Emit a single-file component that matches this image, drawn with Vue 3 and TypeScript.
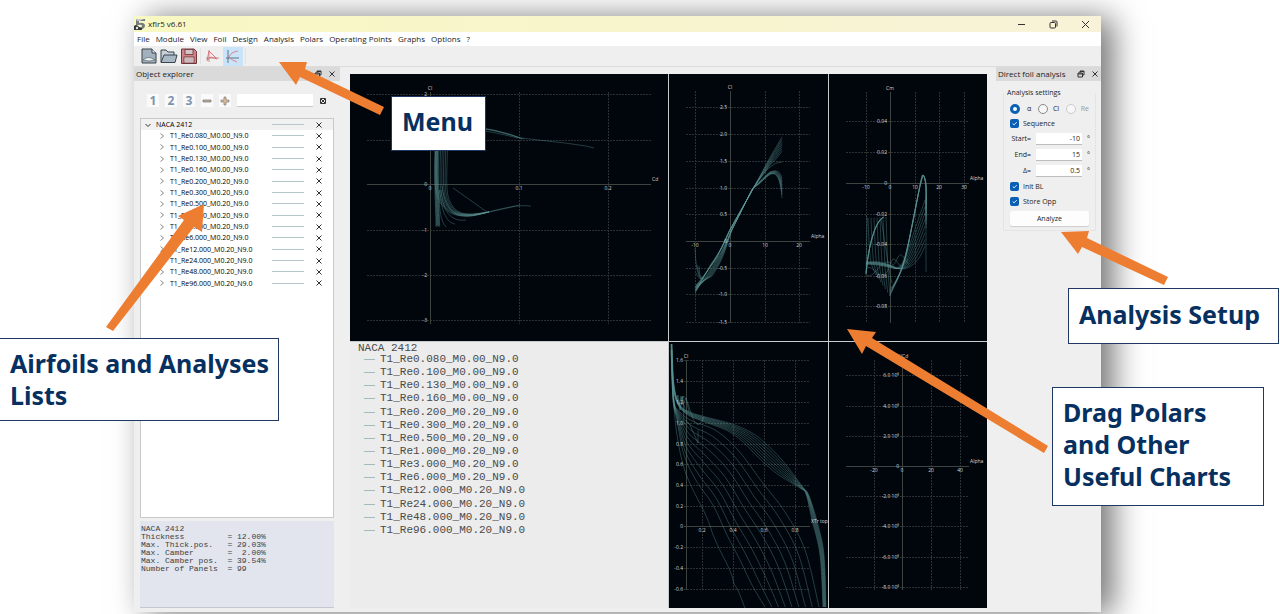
<script setup lang="ts">
import { ref } from 'vue'

interface Tick { at: number; text: string }
type Point = [number, number]
interface Chart {
  id: string
  view: string
  xTitle: Tick
  yTitle: string
  axisX: number
  axisY: number
  left: number
  right: number
  top: number
  bottom: number
  xTicks: Tick[]
  yTicks: Tick[]
  curves: string[]
}

const menus = ['File', 'Module', 'View', 'Foil', 'Design', 'Analysis', 'Polars', 'Operating Points', 'Graphs', 'Options', '?']

const polars = [
  'T1_Re0.080_M0.00_N9.0', 'T1_Re0.100_M0.00_N9.0', 'T1_Re0.130_M0.00_N9.0', 'T1_Re0.160_M0.00_N9.0',
  'T1_Re0.200_M0.20_N9.0', 'T1_Re0.300_M0.20_N9.0', 'T1_Re0.500_M0.20_N9.0', 'T1_Re1.000_M0.20_N9.0',
  'T1_Re3.000_M0.20_N9.0', 'T1_Re6.000_M0.20_N9.0', 'T1_Re12.000_M0.20_N9.0', 'T1_Re24.000_M0.20_N9.0',
  'T1_Re48.000_M0.20_N9.0', 'T1_Re96.000_M0.20_N9.0',
]

const foilInfo = [
  'NACA 2412',
  'Thickness         = 12.00%',
  'Max. Thick.pos.   = 29.03%',
  'Max. Camber       =  2.00%',
  'Max. Camber pos.  = 39.54%',
  'Number of Panels  = 99',
].join('\n')

const filter = ref('')
const variable = ref('alpha')
const sequence = ref(true)
const initBl = ref(true)
const storeOpp = ref(true)
const start = ref('-10')
const end = ref('15')
const delta = ref('0.5')

const range = (n: number): number[] => Array.from({ length: n }, (_, i) => i)
const t = (at: number, text: string): Tick => ({ at, text })

// Catmull-Rom spline through the points, as cubic Bézier segments.
function smooth(p: Point[]): string {
  let d = `M${p[0][0]} ${p[0][1]}`
  for (let i = 0; i < p.length - 1; i++) {
    const a = p[Math.max(0, i - 1)], b = p[i], c = p[i + 1], e = p[Math.min(p.length - 1, i + 2)]
    const c1 = [b[0] + (c[0] - a[0]) / 6, b[1] + (c[1] - a[1]) / 6]
    const c2 = [c[0] - (e[0] - b[0]) / 6, c[1] - (e[1] - b[1]) / 6]
    d += `C${[...c1, ...c2, ...c].map(v => v.toFixed(1)).join(' ')}`
  }
  return d
}

// A family of n curves running evenly from the first outline to the second.
function family(n: number, from: Point[], to: Point[]): string[] {
  return range(n).map(i => {
    const k = i / (n - 1)
    return smooth(from.map((p, j): Point => [p[0] + (to[j][0] - p[0]) * k, p[1] + (to[j][1] - p[1]) * k]))
  })
}

const dragPolar = [
  ...family(8,
    [[436, 135], [435, 170], [436, 190], [441, 204], [453, 214], [470, 216], [489, 212]],
    [[448, 135], [447, 165], [447, 188], [450, 202], [459, 212], [473, 214], [489, 212]]),
  ...range(7).map(i => `M${435 + i * 0.5} 150 C${434 + i * 0.5} 185 ${436 + i * 0.6} 212 ${436 + i * 0.6} ${227 - (i % 3)}`),
  'M439 190 C439 210 441 222 446 227', 'M440 190 C441 212 447 223 455 224',
  'M441 190 C443 212 451 222 466 220', 'M442 186 C446 215 460 220 480 214',
  'M453 188 L487 212', 'M474 214 L489 212 L512 207 Q519 205 531 206', 'M480 214 L505 208 L520 205',
  'M470 128 Q490 128 501 132 L521 138 L565 143 L586 146 L594 148',
  'M470 127 Q490 129 510 134 L522 139', 'M470 129 Q490 131 518 138', 'M475 127 Q495 130 524 139',
]

const lift = [
  ...range(7).map(i => `M695 ${293 - i} L${711 + i} ${264 - i} C${726} ${244 - i} 727 235 731 228 C740 212 748 198 754 187 L${768 + i / 3} ${161 + i * 0.7} Q775 ${149 + i * 2} 782 ${137 + i * 2.4}`),
  'M754 187 Q770 161 782 162',
  ...range(7).map(i => `M696 ${291 - i} L${706 + i} 276 C${720 + i} 256 727 241 ${731 + i * 0.3} ${231 - i / 2} C739 216 747 199 753 188 C761 ${184 - i / 2} 765 ${177 - i / 3} 771 ${174 - i * 0.4} Q780 ${171 - i / 2} 782 ${198 - i * 3.2}`),
  'M695 248 Q696 275 701 279', 'M696 273 Q699 281 704 278', 'M697 265 Q699 277 702 279', 'M699 266 L700 276 L703 278',
]

const moment = [
  ...family(6,
    [[866, 275], [868, 256], [873, 235], [878, 223], [883, 217]],
    [[866, 272], [870, 246], [875, 229], [880, 220], [884, 217]]),
  ...family(7,
    [[868, 218], [869, 240], [871, 262], [876, 275]],
    [[886, 217], [887, 245], [888, 270], [890, 296]]),
  ...family(7,
    [[890, 296], [893, 289], [900, 274], [906, 256], [911, 230], [917, 200], [921, 180], [923, 175], [926, 184], [926, 205]],
    [[890, 288], [894, 284], [902, 267], [908, 244], [914, 217], [919, 191], [922, 179], [924, 176], [926, 190], [926, 228]]),
  ...family(8,
    [[866, 262], [878, 262], [890, 265], [901, 269], [911, 266], [919, 258], [925, 246]],
    [[866, 264], [878, 265], [889, 267], [897, 268], [905, 258], [914, 232], [925, 200]]),
  'M866 270 C871 262 876 276 883 275 S890 258 894 259 S900 274 908 259',
  'M867 275 C873 280 880 262 887 262 S892 270 897 259 S904 262 909 264',
  'M866 215 L867 218 L866 274', 'M926 196 L926 272', 'M881 218 L886 250 Q890 278 892 283',
]

const transition = [
  ...family(8,
    [[672, 344], [674, 385], [680, 405], [690, 412], [702, 416], [732, 424], [752, 433], [765, 443], [782, 460], [802, 486], [809, 496], [818, 525], [824, 555], [826, 607]],
    [[671, 344], [673, 385], [678, 405], [688, 415], [702, 421], [726, 430], [742, 441], [758, 457], [776, 473], [800, 488], [806, 494], [812, 520], [820, 555], [823, 607]]),
  ...family(9,
    [[672, 350], [674, 400], [680, 412], [692, 421], [715, 430], [738, 450], [762, 482], [785, 512], [805, 550], [819, 607]],
    [[671, 350], [673, 400], [677, 420], [684, 455], [697, 482], [713, 505], [727, 535], [740, 560], [752, 585], [765, 607]]),
  'M672 370 C674 424 678 450 686 474 C696 500 705 508 712 532 C722 558 730 565 734 584 C739 590 742 601 745 608',
  'M676 400 L678 395 L680 410 L683 396 L684 425', 'M680 410 L682 397 L685 409', 'M679 406 Q683 385 690 410 T704 417',
  'M686 420 L690 425 L698 443 L698 430', 'M677 396 L679 405 L681 396 L683 405 L686 398 L689 412',
]

const charts: Chart[] = [
  {
    id: 'drag', view: '350 74 318 267', xTitle: t(652, 'Cd'), yTitle: 'Cl', axisX: 430, axisY: 184,
    left: 367, right: 651, top: 92, bottom: 324,
    xTicks: [t(519, '0.1'), t(608, '0.2')],
    yTicks: [t(94, '2'), t(140, '1'), t(230, '-1'), t(275, '-2'), t(320, '-3')], curves: dragPolar,
  },
  {
    id: 'lift', view: '669 74 159 267', xTitle: t(811, 'Alpha'), yTitle: 'Cl', axisX: 730, axisY: 241,
    left: 686, right: 810, top: 91, bottom: 323,
    xTicks: [t(695, '-10'), t(765, '10'), t(799, '20')],
    yTicks: [t(107, '2.5'), t(134, '2.0'), t(161, '1.5'), t(188, '1.0'), t(214, '0.5'), t(268, '-0.5'), t(294, '-1.0'), t(322, '-1.5')],
    curves: lift,
  },
  {
    id: 'moment', view: '829 74 158 267', xTitle: t(970, 'Alpha'), yTitle: 'Cm', axisX: 890, axisY: 183,
    left: 846, right: 969, top: 92, bottom: 323,
    xTicks: [t(866, '-10'), t(915, '10'), t(939, '20'), t(964, '30')],
    yTicks: [t(121, '0.04'), t(152, '0.02'), t(214, '-0.02'), t(244, '-0.04'), t(276, '-0.06'), t(306, '-0.08')],
    curves: moment,
  },
  {
    id: 'transition', view: '669 342 159 266', xTitle: t(811, 'XTr top'), yTitle: 'Cl', axisX: 686, axisY: 526,
    left: 684, right: 810, top: 360, bottom: 590,
    xTicks: [t(702, '0.2'), t(733, '0.4'), t(764, '0.6'), t(795, '0.8')],
    yTicks: [t(360, '1.6'), t(381, '1.4'), t(402, '1.2'), t(423, '1.0'), t(444, '0.8'), t(464, '0.6'), t(485, '0.4'), t(506, '0.2'), t(547, '-0.2'), t(568, '-0.4'), t(589, '-0.6')],
    curves: transition,
  },
  {
    id: 'glide', view: '829 342 158 266', xTitle: t(970, 'Alpha'), yTitle: 'Cl/Cd', axisX: 902, axisY: 466,
    left: 846, right: 969, top: 360, bottom: 590,
    xTicks: [t(874, '-20'), t(931, '20'), t(960, '40')],
    yTicks: [t(375, '6.0 10⁸'), t(406, '4.0 10⁸'), t(436, '2.0 10⁸'), t(496, '-2.0 10⁸'), t(526, '-4.0 10⁸'), t(557, '-6.0 10⁸'), t(587, '-8.0 10⁸')],
    curves: [],
  },
]
</script>

<template>
  <div class="stage">
    <main class="window">
      <header class="titlebar">
        <svg class="logo" viewBox="0 0 12 12" aria-hidden="true">
          <path d="M2 1H11V3H5V5Q11 4 11 8Q10 12 4 11L5 9Q8 10 8 8Q8 6 4 7H2Z" fill="#777b80" />
          <path d="M0 8Q2 6 4 8T8 10V12H0Z" fill="#34383c" />
          <path d="M2 1H10L6 3H3Z" fill="#c3c6c9" />
          <circle cx="3" cy="10" r="1.2" fill="#e8e8e8" />
        </svg>
        <span class="app-name">xflr5 v6.61</span>
        <div class="win-controls">
          <button type="button" aria-label="Minimize"><svg viewBox="0 0 9 9"><path d="M1 4.500H8" /></svg></button>
          <button type="button" aria-label="Restore"><svg viewBox="0 0 9 9"><rect x="1" y="2.5" width="5.5" height="5.5" rx="1" /><path d="M3 1H7Q8 1 8 2V6.5" /></svg></button>
          <button type="button" aria-label="Close"><svg viewBox="0 0 9 9"><path d="M1 1L8 8M8 1L1 8" /></svg></button>
        </div>
      </header>

      <nav class="menubar">
        <button v-for="m in menus" :key="m" type="button">{{ m }}</button>
      </nav>

      <div class="toolbar">
        <button type="button" aria-label="New">
          <svg viewBox="0 0 18 18"><path d="M2 2H12L16 6V16H2Z" fill="#a3b1bf" stroke="#39434d" /><path d="M12 2V6H16" fill="#dde5ec" stroke="#39434d" /><path d="M3 13Q8 8 15 13Q9 15 3 13Z" fill="#eef3f6" stroke="#566" stroke-width=".7" /></svg>
        </button>
        <button type="button" aria-label="Open">
          <svg viewBox="0 0 18 18"><path d="M1 15V3H6L8 5H14V8" fill="#c7d0d8" stroke="#39434d" /><path d="M1 15.500L4 8H17L15 15.500Z" fill="#a9b8c5" stroke="#39434d" /></svg>
        </button>
        <button type="button" aria-label="Save">
          <svg viewBox="0 0 18 18"><path d="M1.500 2H14L16.500 4.500V16.500H1.500Z" fill="#d08288" stroke="#74373d" /><rect x="5" y="2.500" width="8" height="5" fill="#d0c6c8" stroke="#6d3138" stroke-width=".8" /><rect x="4" y="10" width="10" height="6" fill="#e4dcdd" stroke="#6d3138" stroke-width=".8" /><path d="M5 12H13M5 14H13" stroke="#9a7a7d" stroke-width=".7" /></svg>
        </button>
        <i class="separator"></i>
        <button type="button" aria-label="Operating point view">
          <svg viewBox="0 0 18 18" fill="none" stroke-width=".9"><path d="M6 3V15M3 11H16" stroke="#b58c8c" /><path d="M4 14L6 4L10 8L14 12L8 10L4 13" stroke="#e0666b" /></svg>
        </button>
        <button type="button" class="active" aria-label="Polar view" aria-pressed="true">
          <svg viewBox="0 0 18 18" fill="none" stroke-width=".9"><path d="M4 3V16M2 11H15" stroke="#52677a" /><path d="M14 4Q7 5 5 10Q7 13 13 15" stroke="#e0787e" /></svg>
        </button>
        <i class="separator"></i>
      </div>

      <div class="workspace">
        <aside class="dock explorer">
          <div class="dock-title">
            <h2>Object explorer</h2>
            <button type="button" aria-label="Float"><svg viewBox="0 0 8 8"><path d="M1 3H5.500V7H1ZM1 4H5M3 3V1H7V5H6M3 1.500H7" /></svg></button>
            <button type="button" aria-label="Close"><svg viewBox="0 0 8 8"><path d="M1.500 1.500L6.500 6.500M6.500 1.500L1.500 6.500" /></svg></button>
          </div>
          <div class="filter-row">
            <button v-for="n in 3" :key="n" type="button" class="level">{{ n }}</button>
            <button type="button" aria-label="Collapse"><svg viewBox="0 0 12 12"><path d="M2 5H10V7H2Z" fill="#c8b28c" stroke="#6b7078" stroke-width=".7" /></svg></button>
            <button type="button" aria-label="Expand"><svg viewBox="0 0 12 12"><path d="M5 2H7V5H10V7H7V10H5V7H2V5H5Z" fill="#e2bd92" stroke="#7b7c82" stroke-width=".7" /></svg></button>
            <input v-model="filter" type="text" aria-label="Filter" />
            <button type="button" class="clear" aria-label="Clear filter"><svg viewBox="0 0 8 8"><path d="M1.500 1.500H6.500V6.500H1.500ZM2 2L6 6M6 2L2 6" /></svg></button>
          </div>
          <div class="tree">
            <ul>
              <li class="root">
                <button type="button" aria-label="Collapse NACA 2412"><svg viewBox="0 0 8 8"><path d="M1.500 3L4 5.500L6.500 3" /></svg></button>
                <span>NACA 2412</span><i class="stroke"></i>
                <button type="button" aria-label="Hide NACA 2412"><svg viewBox="0 0 8 8"><path d="M1.500 1.500L6.500 6.500M6.500 1.500L1.500 6.500" /></svg></button>
              </li>
              <li v-for="p in polars" :key="p">
                <button type="button" :aria-label="`Expand ${p}`"><svg class="faint" viewBox="0 0 8 8"><path d="M2.500 1.500L5.500 4L2.500 6.500" /></svg></button>
                <span>{{ p }}</span><i class="stroke"></i>
                <button type="button" :aria-label="`Hide ${p}`"><svg viewBox="0 0 8 8"><path d="M1.500 1.500L6.500 6.500M6.500 1.500L1.500 6.500" /></svg></button>
              </li>
            </ul>
          </div>
          <pre class="foil-info">{{ foilInfo }}</pre>
        </aside>

        <section class="graphs">
          <svg v-for="c in charts" :key="c.id" class="chart" :class="c.id" :viewBox="c.view" role="img" :aria-label="`${c.yTitle} against ${c.xTitle.text}`">
            <path v-for="x in c.xTicks" :key="'v' + x.at" class="grid" :d="`M${x.at + 0.5} ${c.top}V${c.bottom}`" />
            <path v-for="y in c.yTicks" :key="'h' + y.at" class="grid" :d="`M${c.left} ${y.at + 0.5}H${c.right}`" />
            <path class="axis" :d="`M${c.axisX + 0.5} ${c.top}V${c.bottom}M${c.left} ${c.axisY + 0.5}H${c.right}`" />
            <path v-for="(d, i) in c.curves" :key="i" class="curve" :d="d" />
            <text v-for="x in c.xTicks" :key="'x' + x.at" text-anchor="middle" :x="x.at" :y="c.axisY + 6">{{ x.text }}</text>
            <text v-for="y in c.yTicks" :key="'y' + y.at" text-anchor="end" :x="c.axisX - 3" :y="y.at + 2">{{ y.text }}</text>
            <text text-anchor="end" :x="c.axisX - 3" :y="c.axisY + 2">0</text>
            <text v-if="c.id !== 'transition'" text-anchor="middle" :x="c.axisX" :y="c.axisY + 6">0</text>
            <text text-anchor="middle" :x="c.axisX" :y="c.top - 2">{{ c.yTitle }}</text>
            <text :x="c.xTitle.at" :y="c.axisY - 3">{{ c.xTitle.text }}</text>
          </svg>
          <div class="legend">
            <h3>NACA 2412</h3>
            <ul>
              <li v-for="p in polars" :key="p"><i class="stroke"></i>{{ p }}</li>
            </ul>
          </div>
        </section>

        <aside class="dock analysis">
          <div class="dock-title">
            <h2>Direct foil analysis</h2>
            <button type="button" aria-label="Float"><svg viewBox="0 0 8 8"><path d="M1 3H5.500V7H1ZM1 4H5M3 3V1H7V5H6M3 1.500H7" /></svg></button>
            <button type="button" aria-label="Close"><svg viewBox="0 0 8 8"><path d="M1.500 1.500L6.500 6.500M6.500 1.500L1.500 6.500" /></svg></button>
          </div>
          <form class="settings" @submit.prevent>
            <h3>Analysis settings</h3>
            <div class="radios">
              <label><input v-model="variable" type="radio" name="variable" value="alpha" />α</label>
              <label><input v-model="variable" type="radio" name="variable" value="cl" />Cl</label>
              <label class="off"><input v-model="variable" type="radio" name="variable" value="re" disabled />Re</label>
            </div>
            <label class="check"><input v-model="sequence" type="checkbox" /><svg viewBox="0 0 10 10"><path d="M3 5L4.500 6.500L7.500 3.500" /></svg>Sequence</label>
            <div class="field"><label for="start">Start=</label><input id="start" v-model="start" type="text" /><span>°</span></div>
            <div class="field"><label for="end">End=</label><input id="end" v-model="end" type="text" /><span>°</span></div>
            <div class="field"><label for="delta">Δ=</label><input id="delta" v-model="delta" type="text" /><span>°</span></div>
            <label class="check"><input v-model="initBl" type="checkbox" /><svg viewBox="0 0 10 10"><path d="M3 5L4.500 6.500L7.500 3.500" /></svg>Init BL</label>
            <label class="check"><input v-model="storeOpp" type="checkbox" /><svg viewBox="0 0 10 10"><path d="M3 5L4.500 6.500L7.500 3.500" /></svg>Store Opp</label>
            <button type="submit" class="analyze">Analyze</button>
          </form>
        </aside>
      </div>
    </main>

    <svg class="arrow to-menu" viewBox="278 60 108 58" aria-hidden="true"><path d="M279 62L307 62L305 69L384 107L380 115L300 77L296 85Z" /></svg>
    <svg class="arrow to-lists" viewBox="104 202 104 132" aria-hidden="true"><path d="M204 204L178 216L184 220L106 327L113 331L194 227L202 232Z" /></svg>
    <svg class="arrow to-setup" viewBox="1060 230 110 58" aria-hidden="true"><path d="M1061 232L1089 231L1087 238L1168 277L1164 285L1082 247L1078 254Z" /></svg>
    <svg class="arrow to-charts" viewBox="846 328 204 126" aria-hidden="true"><path d="M847 329L876 332L872 338L1048 446L1044 453L866 346L862 354Z" /></svg>

    <p class="callout menu-note">Menu</p>
    <p class="callout lists-note">Airfoils and Analyses<br />Lists</p>
    <p class="callout setup-note">Analysis Setup</p>
    <p class="callout charts-note">Drag Polars<br />and Other<br />Useful Charts</p>
  </div>
</template>

<style>
body { margin: 0; background: #fff; }
</style>

<style scoped>
.stage { position: relative; box-sizing: border-box; min-height: 100vh; padding: 16px 179px 2px 134px; overflow: hidden; display: flex; font: 8px/10px "Open Sans", "Noto Sans", sans-serif; color: #1c1c1c; background: #fff; }
button { border: 0; padding: 0; background: none; color: inherit; font: inherit; display: flex; align-items: center; justify-content: center; }
h2, h3, p, ul, pre { margin: 0; padding: 0; font-weight: 400; font-size: inherit; list-style: none; }
input { box-sizing: border-box; margin: 0; font: inherit; color: inherit; }
svg { display: block; }

.window { flex: 1; min-width: 0; display: flex; flex-direction: column; background: #efefef; box-shadow: 12px 2px 30px rgba(0, 0, 0, .55); }
.titlebar { height: 16px; display: flex; align-items: center; gap: 2px; background: linear-gradient(90deg, #f8f8c2, #f8f2d8); }
.logo { width: 12px; height: 12px; }
.app-name { flex: 1; }
.win-controls { display: flex; gap: 23px; padding-right: 11px; }
.win-controls svg { width: 9px; height: 9px; fill: none; stroke: #333; stroke-width: 1; }
.menubar { height: 14px; display: flex; align-items: center; gap: 6px; padding-left: 3px; background: #fff; }
.toolbar { height: 20px; display: flex; align-items: center; gap: 2px; padding-left: 6px; border-bottom: 1px solid #dcdcdc; }
.toolbar button { width: 18px; height: 19px; }
.toolbar svg { width: 18px; height: 18px; }
.toolbar .active { width: 20px; background: #c9e3f8; }
.separator { width: 1px; height: 16px; background: #e2e2e2; }

.workspace { flex: 1; display: flex; }
.dock { display: flex; flex-direction: column; flex: none; }
.dock-title { height: 14px; display: flex; align-items: center; gap: 6px; padding: 0 4px 0 2px; background: #dadada; }
.dock-title h2 { flex: 1; white-space: nowrap; }
.dock-title svg, .tree svg, .clear svg { width: 8px; height: 8px; fill: none; stroke: #333; stroke-width: 1; }

.explorer { width: 206px; }
.filter-row { display: flex; align-items: center; gap: 6px; padding: 13px 13px 11px; }
.filter-row button { width: 12px; height: 13px; background: #fafafa; }
.filter-row svg { width: 12px; height: 12px; }
.filter-row .level { font: 700 12px/13px "Open Sans", sans-serif; color: #7e94ac; }
.filter-row input { flex: 1; min-width: 0; height: 13px; border: 0; border-bottom: 1px solid #c6c6c6; background: #fff; }
.filter-row .clear { width: 8px; background: none; }
.tree { flex: 1; margin: 0 6px 3px 6px; border: 1px solid #c9c9c9; background: #fff; }
.tree ul { height: 170px; display: grid; grid-auto-rows: 1fr; }
.tree li { display: flex; align-items: center; min-height: 0; padding: 0 10px 0 17px; font-size: 7px; line-height: 11px; color: #000; }
.tree .root { padding-left: 3px; background: #f1f1f1; }
.tree span { flex: 1; padding-left: 4px; }
.tree .stroke { width: 32px; height: 1px; margin-right: 11px; background: #b4c8ca; }
.tree .faint { stroke: #888; }
.foil-info { height: 82px; margin: 0 6px 4px 6px; padding: 4px 1px 0; border-bottom: 1px solid #c5c8cf; background: #e2e5ed; color: #3c3e44; font: 8px/8px "Liberation Mono", monospace; }

.graphs { flex: 1; min-width: 0; margin: 7px 9px 4px 10px; display: grid; grid-template-columns: 318fr 159fr 158fr; grid-template-rows: 267fr 266fr; gap: 1px; background: #c8cbcc; }
.chart { width: 100%; height: 100%; min-height: 0; background: #00060c; }
.transition { grid-area: 2 / 2; }
.glide { grid-area: 2 / 3; }
.chart text { font: 5px "Open Sans", sans-serif; fill: #d4d4d4; }
.grid { stroke: #2b3033; stroke-width: 1; stroke-dasharray: 2 1; fill: none; }
.axis { stroke: #3c4340; stroke-width: 1; fill: none; }
.curve { stroke: #5b9797; stroke-width: .7; stroke-opacity: .55; fill: none; }
.legend { grid-area: 2 / 1; background: #ececec; padding: 1px 8px 0; color: #4a4a4a; font: 11px/11px "Liberation Mono", monospace; }
.legend h3 { height: 10px; }
.legend ul { height: 184px; display: grid; grid-auto-rows: 1fr; padding-left: 6px; }
.legend li { display: flex; align-items: center; gap: 5px; min-height: 0; }
.legend .stroke { width: 11px; height: 1px; background: #a4bbbd; }

.analysis { width: 105px; }
.analysis .dock-title { padding-right: 2px; }
.settings { margin: 12px 5px 0 7px; padding: 0 6px 4px; border: 1px solid #e4e4e4; border-top: 0; display: flex; flex-direction: column; font-size: 7px; }
.settings h3 { height: 10px; margin: -5px 0 4px -3px; }
.radios { display: flex; justify-content: space-between; height: 14px; }
.settings label { display: flex; align-items: center; }
.radios label { gap: 7px; }
.radios label + label { gap: 5px; }
.radios input { appearance: none; width: 10px; height: 10px; border: 1px solid #888; border-radius: 50%; background: #f7f7f7; }
.radios input:checked { border: 3px solid #0a60b5; background: #fff; }
.radios input:disabled { border-color: #ccc; }
.radios .off { color: #999; }
.check { position: relative; gap: 4px; height: 15px; }
.check input { appearance: none; width: 9px; height: 9px; border-radius: 2px; background: #fff; }
.check input:checked { background: #0a5fb4; }
.check svg { position: absolute; left: 0; width: 9px; height: 9px; fill: none; stroke: #fff; stroke-width: 1; }
.field { display: grid; grid-template-columns: 21px 46px 6px; column-gap: 5px; align-items: center; height: 16px; }
.field label { justify-content: flex-end; }
.field input { width: 100%; height: 12px; padding: 0 2px; border: 0; border-bottom: 1px solid #bdbdbd; background: #fff; text-align: right; }
.analyze { height: 15px; margin-top: 2px; border-radius: 2px; background: #fdfdfd; box-shadow: 0 1px 1px #ccc; }

.callout { position: absolute; box-sizing: border-box; border: 1px solid #1f3864; background: #fff; color: #06305f; font: 700 25px/32px "Noto Sans", sans-serif; white-space: nowrap; }
.menu-note { left: 391px; top: 96px; padding: 8px 12px 13px 10px; }
.lists-note { left: -1px; top: 338px; width: 280px; padding: 8px 10px 9px; }
.setup-note { right: 1px; top: 288px; width: 211px; padding: 9px 10px 13px; }
.charts-note { right: 16px; top: 387px; width: 212px; padding: 8px 10px 13px; }
.arrow { position: absolute; fill: #ed7d31; }
.to-menu { left: 278px; top: 60px; width: 108px; height: 58px; }
.to-lists { left: 104px; top: 202px; width: 104px; height: 132px; }
.to-setup { right: 110px; top: 230px; width: 110px; height: 58px; }
.to-charts { right: 230px; top: 328px; width: 204px; height: 126px; }
</style>
